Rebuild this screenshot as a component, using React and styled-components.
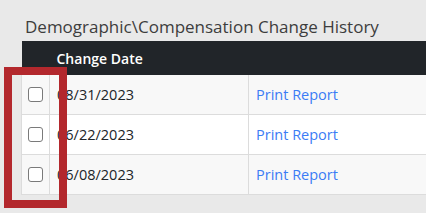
import React from "react";
import styled, { createGlobalStyle } from "styled-components";

const GlobalStyle = createGlobalStyle`
  html, body {
    margin: 0;
    padding: 0;
    background: #e9e9e9;
    overflow: hidden;
  }
  body {
    font-family: "Open Sans", "Liberation Sans", sans-serif;
  }
`;

const Page = styled.div`
  position: relative;
  width: 426px;
  height: 213px;
  padding: 16px 0 0 21px;
  box-sizing: border-box;
  overflow: hidden;
`;

const Title = styled.h3`
  margin: 0 0 4px 4px;
  font-size: 17px;
  font-weight: 400;
  line-height: 21px;
  color: #3d3d3d;
  white-space: nowrap;
`;

const Table = styled.table`
  width: 405px;
  table-layout: fixed;
  border-collapse: collapse;
  font-size: 14.5px;
  color: #212529;
`;

const HeadCell = styled.th`
  height: 34px;
  padding: 0 7px;
  background: #212529;
  color: #fff;
  text-align: left;
  font-size: 14px;
  font-weight: 600;
  width: ${(p) => p.$w || "auto"};
`;

const Row = styled.tr`
  background: ${(p) => (p.$striped ? "#f8f8f8" : "#ffffff")};
`;

const Cell = styled.td`
  height: 39px;
  padding: 0 7px;
  border: 1px solid #dcdcdc;
  border-top: none;
  vertical-align: middle;
  white-space: nowrap;
  text-align: ${(p) => (p.$center ? "center" : "left")};
  &:last-child {
    border-right: none;
  }
`;

const Check = styled.input.attrs({ type: "checkbox" })`
  appearance: none;
  display: block;
  margin: 0 auto;
  width: 15px;
  height: 15px;
  border: 1px solid #7a7a7a;
  border-radius: 3px;
  background: #fff;
`;

const Link = styled.a`
  color: #3b7cf5;
  text-decoration: none;
  cursor: pointer;
`;

const Highlight = styled.div`
  position: absolute;
  left: 4px;
  top: 67px;
  width: 63px;
  height: 141px;
  box-sizing: border-box;
  border: 8px solid #b3282d;
  pointer-events: none;
`;

const rows = ["08/31/2023", "06/22/2023", "06/08/2023"];

export default function App() {
  return (
    <>
      <GlobalStyle />
      <Page>
        <Title>Demographic\Compensation Change History</Title>
        <Table>
          <thead>
            <tr>
              <HeadCell $w="28px" style={{ padding: 0 }} />
              <HeadCell $w="185px">Change Date</HeadCell>
              <HeadCell />
            </tr>
          </thead>
          <tbody>
            {rows.map((d, i) => (
              <Row key={d} $striped={i % 2 === 0}>
                <Cell $center style={{ padding: 0 }}>
                  <Check />
                </Cell>
                <Cell>{d}</Cell>
                <Cell>
                  <Link>Print Report</Link>
                </Cell>
              </Row>
            ))}
          </tbody>
        </Table>
        <Highlight />
      </Page>
    </>
  );
}
